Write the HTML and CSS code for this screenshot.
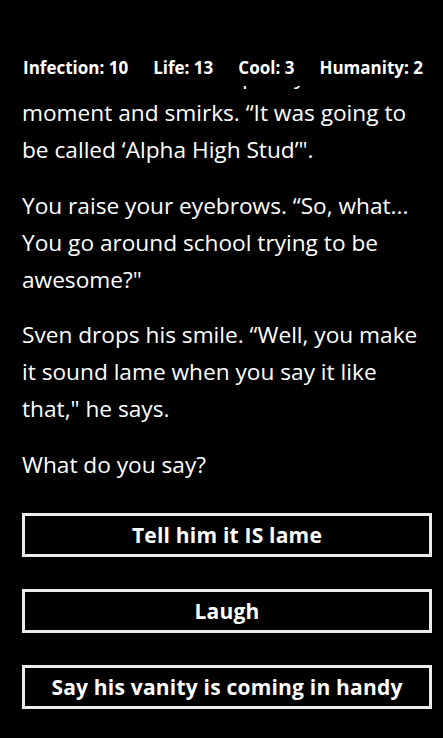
FILE: index.html
```html
<!DOCTYPE html>
<html lang="en">
<head>
<meta charset="utf-8">
<title>Story</title>
<link rel="stylesheet" href="styles.css">
</head>
<body>
<div class="screen">
  <header class="stats">
    <span class="stat">Infection: 10</span>
    <span class="stat">Life: 13</span>
    <span class="stat">Cool: 3</span>
    <span class="stat">Humanity: 2</span>
  </header>
  <main class="viewport">
    <div class="scroll">
      <p class="para">He stares at the wall pretty hard for a moment and smirks. “It was going to be called ‘Alpha High Stud’".</p>
      <p class="para">You raise your eyebrows. “So, what... You go around school trying to be awesome?"</p>
      <p class="para">Sven drops his smile. “Well, you make it sound lame when you say it like that," he says.</p>
      <p class="para">What do you say?</p>
      <div class="choices">
        <button class="choice">Tell him it IS lame</button>
        <button class="choice">Laugh</button>
        <button class="choice">Say his vanity is coming in handy</button>
      </div>
    </div>
  </main>
</div>
</body>
</html>
```

FILE: styles.css
```css
* { box-sizing: border-box; }
html, body {
  margin: 0;
  padding: 0;
  background: #000;
  width: 443px;
  height: 738px;
  overflow: hidden;
}
.screen {
  width: 443px;
  height: 738px;
  display: flex;
  flex-direction: column;
  color: #fff;
  font-family: "Open Sans", "Noto Sans", sans-serif;
}
.stats {
  height: 86px;
  padding: 58px 20px 0 23px;
  display: flex;
  justify-content: space-between;
  font-size: 17px;
  font-weight: 700;
  line-height: 20px;
  flex: none;
}
.viewport {
  flex: 1;
  overflow: hidden;
  padding: 0 11px 0 22px;
}
.scroll {
  margin-top: -29px;
}
.para {
  margin: 0 0 18.6px;
  font-size: 22.67px;
  line-height: 37px;
}
.choices {
  display: flex;
  flex-direction: column;
  gap: 32px;
  margin-top: 30.5px;
}
.choice {
  height: 44px;
  width: 100%;
  background: #000;
  color: #fff;
  border: 3px solid #ececec;
  font-family: inherit;
  font-size: 21px;
  font-weight: 700;
  letter-spacing: 0.2px;
  padding: 0;
  line-height: 36px;
}
```
